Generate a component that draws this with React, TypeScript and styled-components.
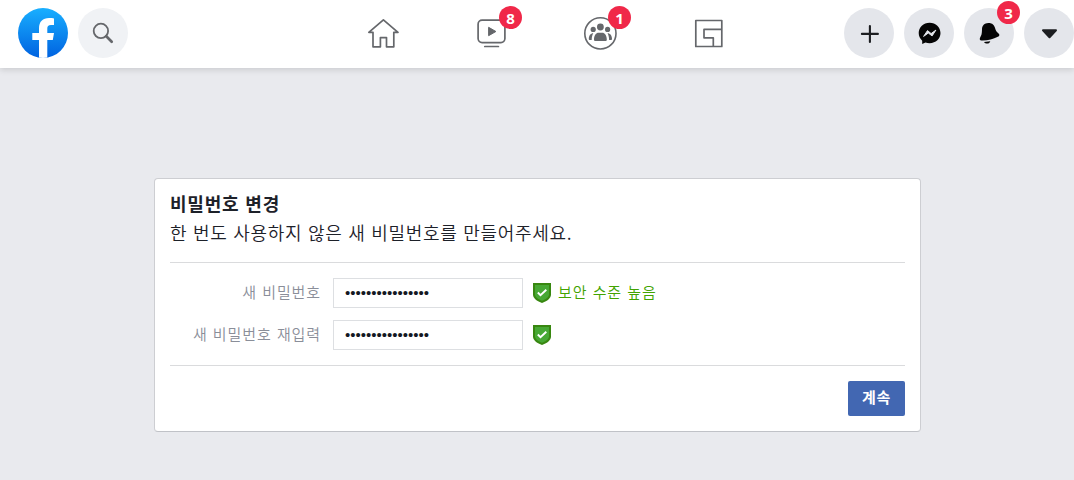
import styled, { createGlobalStyle } from "styled-components";

export default function ChangePasswordPage() {
  return (
    <>
      <GlobalStyle />
      <HeaderStyled>
        <LogoIcon />
        <RoundButton $color="#f0f2f5">
          <SearchIcon />
        </RoundButton>
        <NavStyled>
          <NavItem>
            <HomeIcon />
          </NavItem>
          <NavItem>
            <WatchIcon />
            <Badge $top={6} $left={62}>8</Badge>
          </NavItem>
          <NavItem>
            <GroupsIcon />
            <Badge $top={6} $left={63}>1</Badge>
          </NavItem>
          <NavItem>
            <GamingIcon />
          </NavItem>
        </NavStyled>
        <ActionsStyled>
          <RoundButton>
            <PlusIcon />
          </RoundButton>
          <RoundButton>
            <MessengerIcon />
          </RoundButton>
          <RoundButton>
            <BellIcon />
            <Badge $top={-7} $left={33}>3</Badge>
          </RoundButton>
          <RoundButton>
            <CaretIcon />
          </RoundButton>
        </ActionsStyled>
      </HeaderStyled>
      <MainStyled>
        <CardStyled>
          <CardHeader>
            <h1>비밀번호 변경</h1>
            <p>한 번도 사용하지 않은 새 비밀번호를 만들어주세요.</p>
          </CardHeader>
          <CardBody>
            <Row>
              <label htmlFor="password">새 비밀번호</label>
              <input id="password" type="password" defaultValue="0123456789abcdef" />
              <ShieldIcon />
              <span>보안 수준 높음</span>
            </Row>
            <Row>
              <label htmlFor="confirm">새 비밀번호 재입력</label>
              <input id="confirm" type="password" defaultValue="0123456789abcdef" />
              <ShieldIcon />
            </Row>
          </CardBody>
          <CardFooter>
            <SubmitButton>계속</SubmitButton>
          </CardFooter>
        </CardStyled>
      </MainStyled>
    </>
  );
}

function LogoIcon() {
  return (
    <svg width="50" height="50" viewBox="0 0 50 50">
      <defs>
        <linearGradient id="logo" x1="0" y1="0" x2="0" y2="1">
          <stop offset="0" stopColor="#19afff" />
          <stop offset="1" stopColor="#0062e0" />
        </linearGradient>
        <clipPath id="disc">
          <circle cx="25" cy="25" r="25" />
        </clipPath>
      </defs>
      <g clipPath="url(#disc)">
        <rect width="50" height="50" fill="url(#logo)" />
        <path
          d="M21 50V32h-6.700v-7H21v-4.500C21 13.500 24.800 10 31 10c2 0 4 .2 5 .4V17h-3c-2.800 0-3.700 1.500-3.700 3.500V25H36l-1.200 7h-5.500v18z"
          fill="#fff"
        />
      </g>
    </svg>
  );
}

function SearchIcon() {
  return (
    <svg width="50" height="50" fill="none" stroke="#65676b">
      <circle cx="22.9" cy="22.9" r="7.2" strokeWidth="1.8" />
      <path d="M28.300 28.300l5.400 5.400" strokeWidth="2.7" strokeLinecap="round" />
    </svg>
  );
}

function HomeIcon() {
  return (
    <svg width="36" height="36" fill="none" stroke="#65676b" strokeWidth="1.7" strokeLinejoin="round">
      <path d="M18.400 4.900L3.800 17.300H8v14.500h7.400v-9.200h6.100v9.200h7.300V17.300H33z" />
    </svg>
  );
}

function WatchIcon() {
  return (
    <svg width="36" height="36" fill="none" stroke="#65676b" strokeWidth="1.7">
      <rect x="5.1" y="5.2" width="26.8" height="22.4" rx="4" />
      <path d="M15.600 12.300v8.400l7.300-4.200z" fill="#65676b" strokeWidth="1" strokeLinejoin="round" />
      <path d="M11.800 31.500h13.600" strokeLinecap="round" />
    </svg>
  );
}

function GroupsIcon() {
  return (
    <svg width="36" height="36" fill="#65676b">
      <circle cx="19.4" cy="18.4" r="15.6" fill="none" stroke="#65676b" strokeWidth="1.6" />
      <circle cx="19.4" cy="12" r="3.4" />
      <circle cx="12.2" cy="14.4" r="2.6" />
      <circle cx="26.6" cy="14.4" r="2.6" />
      <path d="M13 24.600c0-4.300 2.200-6.900 4.500-6.900h3.800c2.300 0 4.500 2.600 4.500 6.900 0 1-.5 1.500-1.500 1.500h-9.800c-1 0-1.500-.5-1.500-1.500z" />
      <path d="M12.300 18.300c-1 1.700-1.600 3.800-1.600 6.600H8.600c-.5 0-.8-.3-.8-.9 0-3.400 1.700-5.700 4.500-5.700z" />
      <path d="M26.500 18.300c1 1.700 1.600 3.800 1.600 6.600h2.100c.5 0 .8-.3.8-.9 0-3.400-1.700-5.700-4.500-5.700z" />
    </svg>
  );
}

function GamingIcon() {
  return (
    <svg width="36" height="36" fill="none" stroke="#65676b" strokeWidth="1.7" strokeLinejoin="round">
      <path d="M6.800 5.500h26v26h-26z" />
      <path d="M32.800 14.400H15v8.400h9.300v8.600" />
    </svg>
  );
}

function PlusIcon() {
  return (
    <svg width="50" height="50" stroke="#1c1e21" strokeWidth="2.1" strokeLinecap="round">
      <path d="M25.900 18v16M17.900 25.900h16" />
    </svg>
  );
}

function MessengerIcon() {
  return (
    <svg width="50" height="50">
      <path
        d="M25.600 14.700c-6.200 0-10.900 4.500-10.900 10.400 0 3.200 1.300 5.800 3.500 7.600v3.200l3.300-1.400c1.300.5 2.600.7 4.100.7 6.200 0 10.900-4.400 10.900-10.100s-4.700-10.400-10.900-10.400z"
        fill="#050505"
      />
      <path
        d="M19.600 28.400l3.900-5.800 3.600 3 4.800-3.500-3.800 5.800-3.800-2.900z"
        fill="#e4e6eb"
        stroke="#e4e6eb"
        strokeWidth="1"
        strokeLinejoin="round"
      />
    </svg>
  );
}

function BellIcon() {
  return (
    <svg width="50" height="50" fill="#050505">
      <path d="M18 21.400c0-3.600 2.500-6.200 6.300-6.300 4-.1 6 2.100 6.900 5.300.6 2.300 1.500 3.500 3.100 4.800 1.700 1.400 1.300 3-.5 3.500-4.500 2.300-9.500 3.600-15.200 3.800-1.800 0-3.200-.3-2.800-2.100.4-1.700 1.200-2.300 1.700-4 .4-1.600.4-3 .5-5z" />
      <path d="M20 33.900l6.300-.7c-.5 1.600-1.600 2.300-3.100 2.300-1.400 0-2.500-.5-3.200-1.600z" />
    </svg>
  );
}

function CaretIcon() {
  return (
    <svg width="50" height="50" fill="#1c1e21" stroke="#1c1e21" strokeWidth="2" strokeLinejoin="round">
      <path d="M19 22.300h13l-6.500 7z" />
    </svg>
  );
}

function ShieldIcon() {
  return (
    <svg width="18" height="20" viewBox="0 0 18 20">
      <path d="M0 0h18v11.500c0 4-4.500 7-9 8.500-4.500-1.500-9-4.500-9-8.500z" fill="#388710" />
      <path d="M2 2h14v9.300c0 2.900-3.300 5.200-7 6.500-3.700-1.300-7-3.600-7-6.500z" fill="#47a834" />
      <path d="M4.800 9.500l2.700 2.700 5.800-5.500" fill="none" stroke="#fff" strokeWidth="1.9" />
    </svg>
  );
}

const GlobalStyle = createGlobalStyle`
  * {
    box-sizing: border-box;
  }
  body {
    margin: 0;
    background-color: #e9eaee;
    color: #1d2129;
    font-family: "Noto Sans CJK KR", sans-serif;
  }
  svg {
    display: block;
    flex-shrink: 0;
  }
`;

const HeaderStyled = styled.header`
  display: flex;
  align-items: flex-start;
  height: 68px;
  padding: 8px 0 0 18px;
  background-color: #fff;
  box-shadow: 0 2px 6px rgba(0, 0, 0, 0.13);

  > button {
    margin-left: 10px;
  }
`;

const RoundButton = styled.button<{ $color?: string }>`
  position: relative;
  flex-shrink: 0;
  width: 50px;
  height: 50px;
  padding: 0;
  border: 0;
  border-radius: 50%;
  background-color: ${({ $color }) => $color || "#e4e6eb"};
`;

const NavStyled = styled.nav`
  display: flex;
  margin-left: 201px;
`;

const NavItem = styled.div`
  position: relative;
  display: flex;
  justify-content: center;
  width: 108px;
  margin-top: -8px;
  padding-top: 15px;
`;

const ActionsStyled = styled.div`
  display: flex;
  gap: 10px;
  margin-left: auto;
`;

const Badge = styled.span<{ $top: number; $left: number }>`
  position: absolute;
  top: ${({ $top }) => $top}px;
  left: ${({ $left }) => $left}px;
  width: 23px;
  height: 23px;
  border-radius: 50%;
  background-color: #f02849;
  color: #fff;
  font: 700 15px/24px "Open Sans", sans-serif;
  text-align: center;
`;

const MainStyled = styled.main`
  padding: 110px 153px 0 154px;
`;

const CardStyled = styled.section`
  height: 254px;
  padding: 0 15px;
  border: 1px solid #cdced2;
  border-bottom-color: #c0c2c7;
  border-radius: 4px;
  background-color: #fff;
`;

const CardHeader = styled.div`
  height: 84px;
  padding-top: 10px;
  border-bottom: 1px solid #dadbdd;

  h1,
  p {
    margin: 0;
    font-size: 18px;
    line-height: 29px;
    letter-spacing: 0.8px;
    word-spacing: 1px;
    white-space: nowrap;
  }
  p {
    font-weight: 350;
    letter-spacing: 0.7px;
  }
`;

const CardBody = styled.div`
  display: flex;
  flex-direction: column;
  gap: 12px;
  height: 103px;
  padding-top: 15px;
  border-bottom: 1px solid #dadbdd;
`;

const Row = styled.div`
  display: flex;
  align-items: center;
  height: 30px;
  font-size: 15px;
  font-weight: 350;
  line-height: 28px;
  letter-spacing: 0.9px;
  word-spacing: 1px;

  label {
    width: 151px;
    margin-right: 12px;
    padding-bottom: 2px;
    color: #8a8e99;
    text-align: right;
    white-space: nowrap;
  }
  input {
    width: 190px;
    height: 30px;
    margin-right: 10px;
    padding: 0 11px 2px;
    border: 1px solid #dddfe2;
    border-radius: 0;
    color: #141823;
    font: 15px "Liberation Sans", sans-serif;
    outline: none;
  }
  span {
    margin-left: 7px;
    padding-bottom: 2px;
    color: #42a300;
  }
`;

const CardFooter = styled.div`
  display: flex;
  justify-content: flex-end;
  padding-top: 15px;
`;

const SubmitButton = styled.button`
  width: 57px;
  height: 35px;
  padding: 0 0 4px;
  border: 0;
  border-radius: 2px;
  background-color: #4267b2;
  color: #fff;
  font: 700 15px "Noto Sans CJK KR", sans-serif;
  letter-spacing: 0.7px;
`;
